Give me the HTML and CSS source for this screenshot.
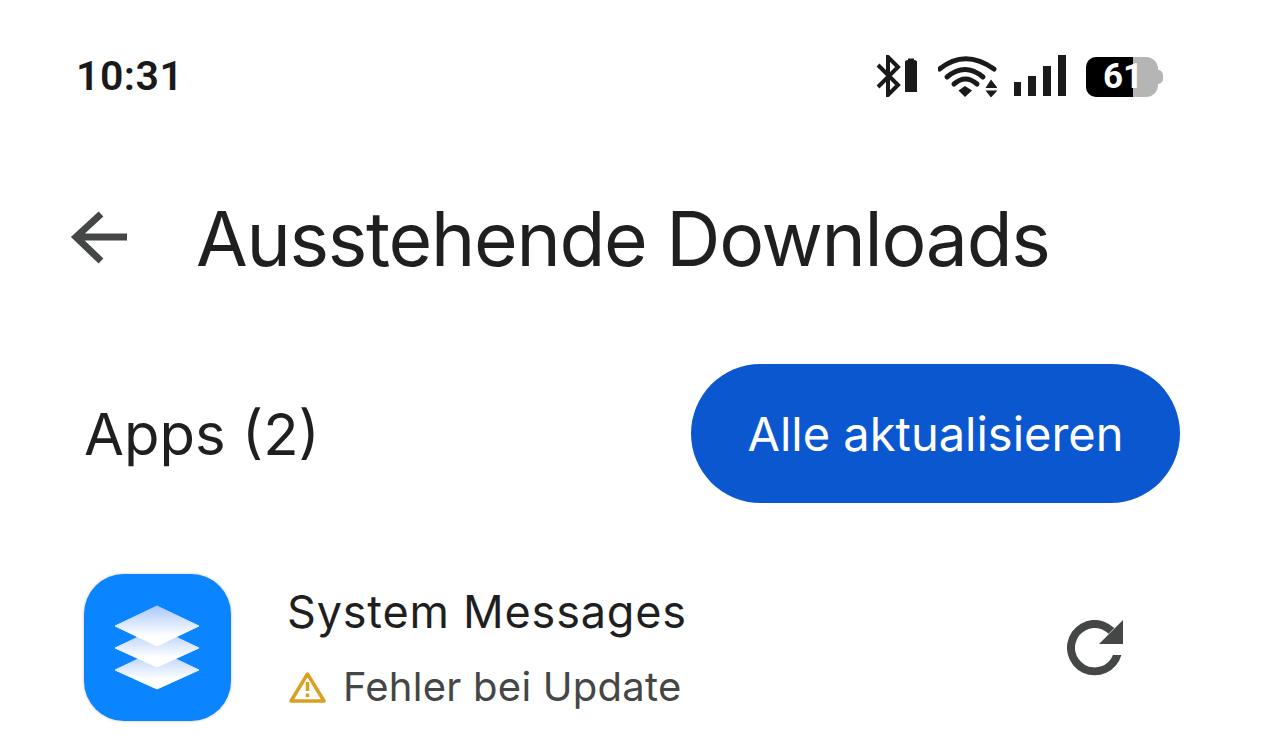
FILE: index.html
```html
<!DOCTYPE html>
<html lang="de">
<head>
<meta charset="utf-8">
<title>Ausstehende Downloads</title>
<link rel="stylesheet" href="styles.css">
</head>
<body>
<div class="screen">
  <header class="status">
    <span class="time">10:31</span>
    <div class="status-icons">
      <svg class="ic-bt" width="41" height="42" viewBox="0 0 41 42">
        <path d="M2 10 L22 30 L12 40 V2 L22 12 L2 32" fill="none" stroke="#1a1a1a" stroke-width="4"/>
        <path d="M29 7 Q29 5 32 5 V3.500 H38 V5 Q41 5 41 7 V37 H29Z" fill="#1a1a1a"/>
      </svg>
      <svg class="ic-wifi" width="59" height="42" viewBox="0 0 59 42">
        <path d="M1.500 14 Q27 -6.600 56 14" fill="none" stroke="#1a1a1a" stroke-width="5" stroke-linecap="round"/>
        <path d="M9 22 Q27 7 45 22" fill="none" stroke="#1a1a1a" stroke-width="5" stroke-linecap="round"/>
        <path d="M16 29 Q27.500 19 39 29" fill="none" stroke="#1a1a1a" stroke-width="5" stroke-linecap="round"/>
        <path d="M27 31 L34 35.500 L27 42 L20.500 35.500Z" fill="#1a1a1a"/>
        <path d="M53 24.500 L59.500 33 H47.500Z M47.500 35.500 H59.500 L53 42.500Z" fill="#1a1a1a"/>
      </svg>
      <svg class="ic-signal" width="53" height="42" viewBox="0 0 53 42">
        <path d="M1 27 H8 V41 H1Z M15 21 H23 V41 H15Z M30 11 H38 V41 H30Z M45 0 H53 V41 H45Z" fill="#1a1a1a"/>
      </svg>
      <div class="battery">
        <div class="battery-body">
          <div class="battery-fill"></div>
          <span class="battery-num">61</span>
        </div>
        <div class="battery-cap"></div>
      </div>
    </div>
  </header>

  <div class="appbar">
    <svg class="back" width="58" height="54" viewBox="0 0 58 54">
      <path d="M57 26 H6 M31 3 L6 26 L31 50" fill="none" stroke="#444746" stroke-width="7"/>
    </svg>
    <h1 class="title">Ausstehende Downloads</h1>
  </div>

  <div class="section">
    <span class="section-label">Apps (2)</span>
    <button class="update-all">Alle aktualisieren</button>
  </div>

  <div class="app-row">
    <div class="app-icon">
      <svg width="147" height="147" viewBox="0 0 147 147">
        <defs>
          <linearGradient id="layer" x1="0" y1="0" x2="0" y2="1">
            <stop offset="0" stop-color="#a9c8fb"/>
            <stop offset="0.75" stop-color="#ffffff"/>
          </linearGradient>
        </defs>
        <path d="M73 76 L115 96 L73 115 L31 96Z" fill="url(#layer)" stroke="url(#layer)" stroke-linejoin="round"/>
        <path d="M73 54 L115 74 L73 93 L31 74Z" fill="url(#layer)" stroke="url(#layer)" stroke-linejoin="round"/>
        <path d="M73 32 L115 52 L73 72 L31 52Z" fill="url(#layer)" stroke="url(#layer)" stroke-linejoin="round"/>
      </svg>
    </div>
    <div class="app-text">
      <div class="app-name">System Messages</div>
      <div class="app-status">
        <svg class="warn" width="37" height="32" viewBox="0 0 37 32">
          <path d="M18.500 3 L35 30 H2Z" fill="none" stroke="#d9a021" stroke-width="3.500" stroke-linejoin="round"/>
          <path d="M18.500 11 V20 M18.500 22.500 V26" fill="none" stroke="#d9a021" stroke-width="3.500"/>
        </svg>
        <span>Fehler bei Update</span>
      </div>
    </div>
    <svg class="retry" width="58" height="58" viewBox="0 0 58 58">
      <path d="M55.400 35 A27.700 27.700 0 1 1 48.300 8.100 L42.600 13.800 A19.700 19.700 0 1 0 47 35Z" fill="#444746"/>
      <path d="M57 0 V24 H33Z" fill="#444746"/>
    </svg>
  </div>
</div>
</body>
</html>
```
FILE: styles.css
```css
* { box-sizing: border-box; }
html, body { margin: 0; padding: 0; }
body {
  width: 1262px;
  height: 755px;
  overflow: hidden;
  background: #fff;
  font-family: Inter, sans-serif;
  color: #1f1f1f;
}
.screen { display: flex; flex-direction: column; height: 755px; }

.status {
  height: 42px;
  margin-top: 55px;
  padding: 0 99px 0 76px;
  display: flex;
  align-items: center;
  justify-content: space-between;
}
.time {
  font-family: Roboto, sans-serif;
  font-weight: 600;
  font-size: 41px;
  letter-spacing: 0.5px;
  color: #1a1a1a;
}
.status-icons { display: flex; align-items: flex-start; }
.ic-wifi { margin-left: 21px; }
.ic-signal { margin-left: 16px; }
.battery {
  display: flex;
  align-items: center;
  margin: 2px 0 0 20px;
}
.battery-body {
  position: relative;
  width: 72px;
  height: 40px;
  background: #b5b5b5;
  border-radius: 10px 12px 12px 10px;
}
.battery-cap {
  width: 5px;
  height: 14px;
  background: #b5b5b5;
  border-radius: 0 5px 5px 0;
}
.battery-fill {
  width: 47px;
  height: 40px;
  background: #000;
  border-radius: 10px 0 0 10px;
}
.battery-num {
  position: absolute;
  left: 17px;
  top: 0;
  font-family: Roboto, sans-serif;
  font-weight: 700;
  font-size: 35px;
  line-height: 40px;
  color: #fff;
}

.appbar {
  display: flex;
  align-items: center;
  margin-top: 114px;
  padding-left: 70px;
  height: 54px;
}
.title {
  margin: 0 0 0 68px;
  font-weight: 400;
  font-size: 75px;
  letter-spacing: -1.3px;
  color: #1f1f1f;
}

.section {
  display: flex;
  align-items: center;
  justify-content: space-between;
  margin-top: 99px;
  padding: 0 82px 0 84px;
}
.section-label { font-size: 58px; color: #1f1f1f; }
.update-all {
  width: 489px;
  height: 139px;
  border: 0;
  border-radius: 70px;
  background: #0b57d0;
  color: #fff;
  font-family: Inter, sans-serif;
  font-size: 47px;
  padding-bottom: 2px;
}

.app-row {
  display: flex;
  align-items: flex-start;
  margin-top: 71px;
  padding-left: 84px;
}
.app-icon {
  width: 147px;
  height: 147px;
  background: #0a84ff;
  border-radius: 40px;
  box-shadow: 0 0 3px rgba(0,0,0,.25);
}
.app-icon svg { display: block; }
.app-text { margin-left: 56px; margin-top: 9px; width: 779px; }
.app-name { font-size: 45px; letter-spacing: 0.8px; line-height: 58px; color: #1f1f1f; }
.app-status {
  display: flex;
  align-items: center;
  gap: 17px;
  margin-top: 24px;
  font-size: 40px;
  letter-spacing: 0.25px;
  line-height: 44px;
  color: #444746;
}
.warn { margin-left: 2px; }
.retry { margin-top: 46px; }
```
